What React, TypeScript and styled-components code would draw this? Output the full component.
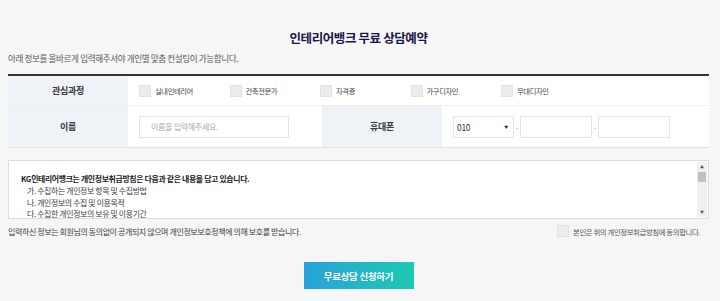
import React from 'react';
import styled, { createGlobalStyle } from 'styled-components';

const GlobalStyle = createGlobalStyle`
    body {
        margin: 0;
        background: #f6f6f6;
        font-family: "Noto Sans CJK KR", "Noto Sans", sans-serif;
        color: #333;
    }
`;

const Page = styled.section`
    width: 701px;
    padding: 0 0 14px 8px;
`;

const Title = styled.h2`
    margin: 0;
    padding-top: 29px;
    height: 18px;
    line-height: 18px;
    text-align: center;
    font-size: 12.5px;
    font-weight: 700;
    color: #1b1446;
    letter-spacing: -0.4px;
`;

const Intro = styled.p`
    margin: 4px 0 0;
    height: 14px;
    line-height: 14px;
    font-size: 8.6px;
    color: #5a5a5a;
    letter-spacing: -0.4px;
`;

const Table = styled.div`
    margin-top: 9px;
    border-top: 2px solid #333;
`;

const Row = styled.div<{ cols: string; h: number; last?: boolean }>`
    display: grid;
    grid-template-columns: ${(p) => p.cols};
    height: ${(p) => p.h}px;
    border-bottom: 1px solid ${(p) => (p.last ? '#e2e2e2' : '#f0f0f0')};
    background: #fff;
`;

const Label = styled.div`
    display: flex;
    align-items: center;
    justify-content: center;
    background: #eff2f6;
    font-size: 9px;
    font-weight: 700;
    color: #3a3a3a;
    letter-spacing: -0.3px;
`;

const Cell = styled.div`
    display: flex;
    align-items: center;
    padding-left: 11px;
`;

const Option = styled.label`
    display: flex;
    align-items: center;
    width: 90.5px;
    font-size: 7.3px;
    color: #444;
    letter-spacing: -0.4px;
`;

const Box = styled.span`
    display: inline-block;
    width: 10px;
    height: 10px;
    margin-right: 4px;
    background: #ececec;
    border: 1px solid #e2e2e2;
`;

const TextInput = styled.div<{ w: number }>`
    width: ${(p) => p.w}px;
    height: 22px;
    box-sizing: border-box;
    border: 1px solid #e4e4e4;
    background: #fff;
    display: flex;
    align-items: center;
    padding-left: 11px;
    font-size: 8px;
    color: #aaa;
    letter-spacing: -0.3px;
`;

const Select = styled(TextInput)`
    justify-content: space-between;
    padding: 0 5px 0 3px;
    color: #333;
    font-size: 8.5px;
`;

const Caret = styled.span`
    font-size: 4px;
    color: #222;
`;

const Dash = styled.span`
    width: 6px;
    text-align: center;
    font-size: 7px;
    color: #999;
`;

const PolicyBox = styled.div`
    margin-top: 12px;
    height: 59px;
    box-sizing: border-box;
    border: 1px solid #dcdcdc;
    background: #fff;
    display: flex;
`;

const PolicyText = styled.div`
    flex: 1;
    overflow: hidden;
    padding: 12px 0 0 12px;
    font-size: 7.9px;
    line-height: 11.8px;
    color: #444;
    letter-spacing: -0.35px;
`;

const PolicyLine = styled.div<{ strong?: boolean }>`
    padding-left: ${(p) => (p.strong ? 0 : 6)}px;
    font-weight: ${(p) => (p.strong ? 700 : 400)};
    color: ${(p) => (p.strong ? '#222' : '#3c3c3c')};
    white-space: nowrap;
`;

const Scrollbar = styled.div`
    width: 10px;
    margin: 1px 1px 1px 0;
    background: #f0f0f0;
    display: flex;
    flex-direction: column;
    align-items: center;
`;

const Arrow = styled.span`
    height: 10px;
    line-height: 10px;
    font-size: 4px;
    color: #555;
`;

const Thumb = styled.div`
    width: 8px;
    height: 10px;
    background: #c1c1c1;
`;

const Track = styled.div`
    flex: 1;
`;

const Footer = styled.div`
    display: flex;
    justify-content: space-between;
    align-items: center;
    margin-top: 5px;
    height: 14px;
    font-size: 8px;
    color: #3c3c3c;
    letter-spacing: -0.4px;
`;

const Agree = styled.label`
    display: flex;
    align-items: center;
    padding-right: 9px;
    font-size: 7.4px;
    color: #555;
`;

const Submit = styled.button`
    display: block;
    margin: 24px auto 0;
    width: 110px;
    height: 27px;
    border: 0;
    padding: 0;
    background: linear-gradient(90deg, #29a2d9 0%, #1cc9b4 100%);
    color: #fff;
    font-family: inherit;
    font-size: 9.5px;
    font-weight: 700;
    letter-spacing: -0.3px;
`;

const courses = ['실내인테리어', '건축전문가', '자격증', '가구디자인', '무대디자인'];

const policy = [
    '가. 수집하는 개인정보 항목 및 수집방법',
    '나. 개인정보의 수집 및 이용목적',
    '다. 수집한 개인정보의 보유 및 이용기간',
];

export default function App() {
    return (
        <Page>
            <GlobalStyle />
            <Title>인테리어뱅크 무료 상담예약</Title>
            <Intro>아래 정보를 올바르게 입력해주셔야 개인별 맞춤 컨설팅이 가능합니다.</Intro>
            <Table>
                <Row cols="120px 1fr" h={29}>
                    <Label>관심과정</Label>
                    <Cell>
                        {courses.map((c) => (
                            <Option key={c}>
                                <Box />
                                {c}
                            </Option>
                        ))}
                    </Cell>
                </Row>
                <Row cols="120px 194px 120px 1fr" h={41} last>
                    <Label>이름</Label>
                    <Cell>
                        <TextInput w={150}>이름을 입력해주세요.</TextInput>
                    </Cell>
                    <Label>휴대폰</Label>
                    <Cell>
                        <Select w={61}>
                            010
                            <Caret>▼</Caret>
                        </Select>
                        <Dash>-</Dash>
                        <TextInput w={72} />
                        <Dash>-</Dash>
                        <TextInput w={72} />
                    </Cell>
                </Row>
            </Table>
            <PolicyBox>
                <PolicyText>
                    <PolicyLine strong>KG인테리어뱅크는 개인정보취급방침은 다음과 같은 내용을 담고 있습니다.</PolicyLine>
                    {policy.map((l) => (
                        <PolicyLine key={l}>{l}</PolicyLine>
                    ))}
                </PolicyText>
                <Scrollbar>
                    <Arrow>▲</Arrow>
                    <Thumb />
                    <Track />
                    <Arrow>▼</Arrow>
                </Scrollbar>
            </PolicyBox>
            <Footer>
                <span>입력하신 정보는 회원님의 동의없이 공개되지 않으며 개인정보보호정책에 의해 보호를 받습니다.</span>
                <Agree>
                    <Box />
                    본인은 위의 개인정보취급방침에 동의합니다.
                </Agree>
            </Footer>
            <Submit>무료상담 신청하기</Submit>
        </Page>
    );
}
